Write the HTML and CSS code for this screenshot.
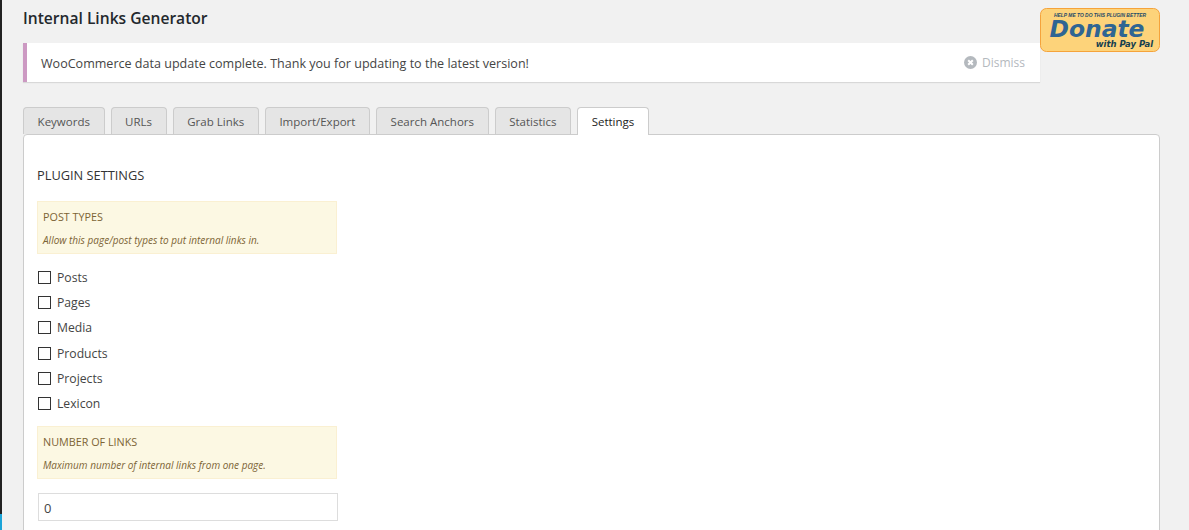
FILE: index.html
```html
<!DOCTYPE html>
<html lang="en">
<head>
<meta charset="utf-8">
<title>Internal Links Generator</title>
<link rel="stylesheet" href="styles.css">
</head>
<body>
<div class="edge"></div>
<main class="wrap">
  <a class="donate" href="#">
    <svg width="120" height="44" viewBox="0 0 120 44">
      <rect x="0.5" y="0.5" width="119" height="43" rx="6" fill="#fdd37a" stroke="#f5a33b"/>
      <text class="d-top" x="14" y="9.3" textLength="92" lengthAdjust="spacingAndGlyphs">HELP ME TO DO THIS PLUGIN BETTER</text>
      <text class="d-main" x="9.5" y="29" textLength="95" lengthAdjust="spacingAndGlyphs">Donate</text>
      <text class="d-sub" x="55.7" y="38.8" textLength="57.5" lengthAdjust="spacingAndGlyphs">with Pay Pal</text>
    </svg>
  </a>
  <h1 class="title">Internal Links Generator</h1>
  <div class="notice">
    <p class="notice-text">WooCommerce data update complete. Thank you for updating to the latest version!</p>
    <a class="dismiss" href="#">
      <svg class="dismiss-icon" width="13" height="13" viewBox="0 0 13 13"><circle cx="6.5" cy="6.5" r="6.5" fill="#b4b9be"/><path d="M4.2 4.2l4.6 4.6M8.8 4.2l-4.6 4.6" stroke="#fff" stroke-width="2"/></svg>
      <span>Dismiss</span>
    </a>
  </div>
  <nav class="tabs">
    <a class="tab" href="#">Keywords</a>
    <a class="tab" href="#">URLs</a>
    <a class="tab" href="#">Grab Links</a>
    <a class="tab" href="#">Import/Export</a>
    <a class="tab" href="#">Search Anchors</a>
    <a class="tab" href="#">Statistics</a>
    <a class="tab active" href="#">Settings</a>
  </nav>
  <section class="panel">
    <h2 class="panel-title">PLUGIN SETTINGS</h2>
    <div class="hint">
      <h3 class="hint-title">POST TYPES</h3>
      <p class="hint-text">Allow this page/post types to put internal links in.</p>
    </div>
    <ul class="checks">
      <li class="check"><span class="box"></span>Posts</li>
      <li class="check"><span class="box"></span>Pages</li>
      <li class="check"><span class="box"></span>Media</li>
      <li class="check"><span class="box"></span>Products</li>
      <li class="check"><span class="box"></span>Projects</li>
      <li class="check"><span class="box"></span>Lexicon</li>
    </ul>
    <div class="hint">
      <h3 class="hint-title">NUMBER OF LINKS</h3>
      <p class="hint-text">Maximum number of internal links from one page.</p>
    </div>
    <div class="field">0</div>
  </section>
</main>
</body>
</html>
```
FILE: styles.css
```css
html, body { margin: 0; padding: 0; height: 530px; overflow: hidden; }
body { background: #f1f1f1; font-family: "Open Sans", sans-serif; color: #444; position: relative; }
.edge { position: absolute; left: 0; top: 0; width: 1.5px; height: 530px; background: linear-gradient(#222 0 514px, #1ba4d8 514px); }
.wrap { margin-left: 23px; width: 1137px; }
.donate { float: right; display: block; margin-top: 8px; width: 120px; height: 44px; }
.donate svg { display: block; }
.d-top { font: italic 700 5.4px "Liberation Sans", sans-serif; fill: #1d4a68; }
.d-main { font: italic 700 23px "DejaVu Sans", sans-serif; fill: #2f6593; }
.d-sub { font: italic 700 8.2px "DejaVu Sans", sans-serif; fill: #143f4f; }
.title { margin: 0; padding-top: 8px; height: 35px; font-size: 15.6px; line-height: 20px; font-weight: 600; color: #23282d; }
.notice { width: 1017px; height: 39px; box-sizing: border-box; background: #fff; border-left: 4px solid #cc99c2; box-shadow: 0 1px 1px rgba(0,0,0,.1); display: flex; align-items: center; justify-content: space-between; padding: 0 15px 0 14px; }
.notice-text { margin: 1px 0 0; font-size: 12.55px; color: #444; }
.dismiss { display: flex; align-items: center; gap: 5px; font-size: 12px; color: #b4b9be; text-decoration: none; }
.tabs { display: flex; gap: 6px; margin-top: 25px; height: 27px; position: relative; z-index: 1; }
.tab { box-sizing: border-box; height: 27px; padding: 0 13.6px; line-height: 28px; font-size: 11.5px; color: #555; background: #e5e5e5; border: 1px solid #ccc; border-bottom: 0; border-radius: 4px 4px 0 0; text-decoration: none; }
.tab.active { background: #fff; color: #222; height: 28px; }
.panel { box-sizing: border-box; height: 500px; background: #fff; border: 1px solid #ccc; border-radius: 4px 4px 0 0; padding: 31px 13px 0; }
.panel-title { margin: 0 0 17px; font-size: 12.8px; line-height: 18px; font-weight: 400; color: #333; }
.hint { box-sizing: border-box; width: 300px; height: 53px; background: #fcf8e3; border: 1px solid #faf0d2; padding: 7px 5px; color: #7d6435; }
.hint-title { margin: 0; font-size: 10.8px; line-height: 16px; font-weight: 400; }
.hint-text { margin: 8px 0 0; font-size: 10px; line-height: 14px; font-style: italic; }
.checks { list-style: none; margin: 11px 0 10px; padding: 0; }
.check { display: flex; align-items: center; height: 25.2px; font-size: 12.2px; color: #444; }
.box { box-sizing: border-box; width: 13px; height: 13px; margin: 0 6px 0 1px; border: 1px solid #333; background: #fff; }
.field { box-sizing: border-box; width: 300px; height: 28px; margin: 14px 0 0 1px; border: 1px solid #ddd; padding: 0 5px; line-height: 28px; font-size: 13px; color: #444; }
```
